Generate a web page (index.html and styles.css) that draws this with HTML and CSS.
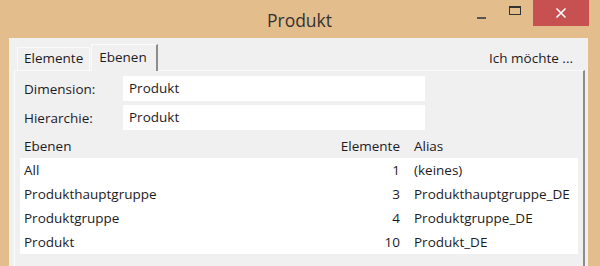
FILE: index.html
```html
<!DOCTYPE html>
<html lang="de">
<head>
  <meta charset="UTF-8" />
  <title>Produkt</title>
  <link rel="stylesheet" href="styles.css">
</head>
<body>
  <div class="window">
    <div class="titlebar">
      <div></div>
      <div class="title">Produkt</div>
      <div class="controls">
        <span class="btn-min"><span class="min-line"></span></span>
        <span class="btn-max"><span class="max-box"></span></span>
        <span class="btn-close">
          <svg width="12" height="12" viewBox="0 0 12 12">
            <path d="M1.5 1.5 L10.5 10.5 M10.5 1.5 L1.5 10.5" stroke="#fff" stroke-width="1.6" fill="none" />
          </svg>
        </span>
      </div>
    </div>

    <div class="client">
      <div class="tabbar">
        <div class="tabs">
          <div class="tab">Elemente</div>
          <div class="tab active">Ebenen</div>
        </div>
        <div class="menu-link">Ich möchte ...</div>
      </div>

      <div class="panel">
        <div class="field">
          <label>Dimension:</label>
          <div class="input">Produkt</div>
        </div>
        <div class="field">
          <label>Hierarchie:</label>
          <div class="input">Produkt</div>
        </div>

        <div class="grid head">
          <span>Ebenen</span>
          <span class="num">Elemente</span>
          <span class="alias">Alias</span>
        </div>
        <div class="list">
          <div class="grid row">
            <span>All</span>
            <span class="num">1</span>
            <span class="alias">(keines)</span>
          </div>
          <div class="grid row">
            <span>Produkthauptgruppe</span>
            <span class="num">3</span>
            <span class="alias">Produkthauptgruppe_DE</span>
          </div>
          <div class="grid row">
            <span>Produktgruppe</span>
            <span class="num">4</span>
            <span class="alias">Produktgruppe_DE</span>
          </div>
          <div class="grid row">
            <span>Produkt</span>
            <span class="num">10</span>
            <span class="alias">Produkt_DE</span>
          </div>
        </div>
      </div>
    </div>
  </div>
</body>
</html>
```

FILE: styles.css
```css
* {
  margin: 0;
  padding: 0;
  box-sizing: border-box;
}

body {
  background: #e4bd8d;
  font-family: 'Open Sans', 'Noto Sans', sans-serif;
  font-size: 13.5px;
  color: #1e1a24;
  overflow: hidden;
}

.window {
  width: 600px;
  height: 266px;
  background: #e4bd8d;
  display: flex;
  flex-direction: column;
}

/* title bar */
.titlebar {
  height: 38px;
  display: grid;
  grid-template-columns: 1fr auto 1fr;
  align-items: start;
}

.title {
  font-size: 17.5px;
  color: #333;
  padding-top: 8px;
  margin-left: -1px;
}

.controls {
  display: flex;
  justify-content: flex-end;
  padding-right: 11px;
}

.btn-min,
.btn-max {
  width: 26px;
  height: 26px;
  display: flex;
  align-items: center;
  justify-content: center;
}

.btn-min {
  margin-right: 6px;
}

.min-line {
  width: 9px;
  height: 2px;
  background: #555;
  margin-top: 10px;
}

.max-box {
  width: 12px;
  height: 9px;
  border: 1px solid #333;
  border-top-width: 2px;
  margin-top: -5px;
  margin-left: 3px;
}

.btn-close {
  width: 56px;
  height: 26px;
  margin-left: 7px;
  background: #c75050;
  display: flex;
  align-items: center;
  justify-content: center;
}

/* client area */
.client {
  flex: 1;
  margin: 0 12px 0 9px;
  background: #f0f0f0;
  display: flex;
  flex-direction: column;
}

.tabbar {
  height: 32px;
  display: flex;
  justify-content: space-between;
  align-items: flex-end;
  padding-left: 8px;
}

.tabs {
  display: flex;
  align-items: flex-end;
}

.tab {
  height: 23px;
  padding: 0 6px;
  line-height: 21px;
  border: 1px solid #fafafa;
  border-bottom: none;
  background: #f0f0f0;
}

.tab.active {
  height: 27px;
  line-height: 24px;
  padding: 0 9px 0 7px;
  margin-left: 1px;
  margin-bottom: -1px;
  border-right: 2px solid #8c8c8c;
  position: relative;
  z-index: 1;
}

.menu-link {
  align-self: center;
  padding-top: 8px;
  padding-right: 15px;
}

.panel {
  flex: 1;
  margin: 0 3px 0 5px;
  border-top: 1px solid #fafafa;
  border-left: 1px solid #fafafa;
  border-right: 2px solid #8c8c8c;
  padding: 5px 5px 0 5px;
}

.field {
  display: flex;
  align-items: center;
  margin-bottom: 4px;
  padding-left: 4px;
}

.field label {
  width: 99px;
}

.input {
  width: 302px;
  height: 25px;
  line-height: 25px;
  background: #fff;
  padding-left: 6px;
}

.grid {
  display: grid;
  grid-template-columns: 306px 70px 1fr;
  align-items: center;
  height: 24px;
  padding-left: 4px;
}

.head {
  margin-top: 1px;
}

.num {
  text-align: right;
}

.alias {
  padding-left: 14px;
}

.list {
  background: #fff;
}
```
